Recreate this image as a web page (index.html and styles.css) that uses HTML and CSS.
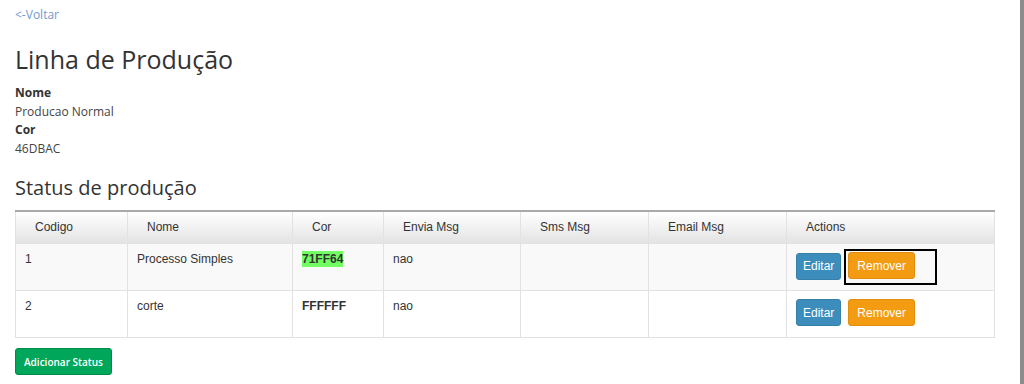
FILE: index.html
```html
<!DOCTYPE html>
<html lang="pt">
<head>
    <meta charset="UTF-8">
    <title>Linha de Produção</title>
    <link rel="stylesheet" href="styles.css">
</head>
<body>
    <div class="page">
        <a class="back" href="#">&lt;-Voltar</a>

        <h1>Linha de Produção</h1>

        <dl class="details">
            <dt>Nome</dt>
            <dd>Producao Normal</dd>
            <dt>Cor</dt>
            <dd>46DBAC</dd>
        </dl>

        <h2>Status de produção</h2>

        <table class="status-table">
            <colgroup>
                <col style="width: 112px">
                <col style="width: 165px">
                <col style="width: 91px">
                <col style="width: 137px">
                <col style="width: 128px">
                <col style="width: 138px">
                <col>
            </colgroup>
            <thead>
                <tr>
                    <th>Codigo</th>
                    <th>Nome</th>
                    <th>Cor</th>
                    <th>Envia Msg</th>
                    <th>Sms Msg</th>
                    <th>Email Msg</th>
                    <th>Actions</th>
                </tr>
            </thead>
            <tbody>
                <tr>
                    <td>1</td>
                    <td>Processo Simples</td>
                    <td><span class="swatch" style="background-color: #71FF64">71FF64</span></td>
                    <td>nao</td>
                    <td></td>
                    <td></td>
                    <td>
                        <div class="actions">
                            <button class="btn btn-edit">Editar</button>
                            <span class="focus-box"><button class="btn btn-remove">Remover</button></span>
                        </div>
                    </td>
                </tr>
                <tr>
                    <td>2</td>
                    <td>corte</td>
                    <td><span class="swatch" style="background-color: #FFFFFF">FFFFFF</span></td>
                    <td>nao</td>
                    <td></td>
                    <td></td>
                    <td>
                        <div class="actions">
                            <button class="btn btn-edit">Editar</button>
                            <button class="btn btn-remove">Remover</button>
                        </div>
                    </td>
                </tr>
            </tbody>
        </table>

        <button class="btn btn-add">Adicionar Status</button>
    </div>
    <div class="edge"></div>
</body>
</html>
```

FILE: styles.css
```css
body {
    margin: 0;
    padding: 0;
    background-color: #ffffff;
    font-family: "Open Sans", "Noto Sans", sans-serif;
    color: #333333;
    display: flex;
}

.page {
    flex: 1;
    padding: 6px 25px 0 15px;
}

.edge {
    width: 4px;
    height: 384px;
    background-color: #8c8c8c;
}

.back {
    display: block;
    font-size: 12px;
    color: #6f9bd1;
    text-decoration: none;
    line-height: 18px;
}

h1 {
    margin: 18px 0 8px;
    font-size: 25px;
    font-weight: 400;
    line-height: 34px;
    color: #333;
}

.details {
    margin: 0;
    font-size: 12px;
    line-height: 18.5px;
}

.details dt {
    font-weight: bold;
}

.details dd {
    margin: 0;
    color: #444;
}

h2 {
    margin: 17px 0 9px;
    font-size: 20px;
    font-weight: 400;
    line-height: 26px;
}

.status-table {
    width: 980px;
    border-collapse: collapse;
    table-layout: fixed;
    font-family: "Liberation Sans", Arial, sans-serif;
    font-size: 12px;
    border-top: 2px solid #a9a9a9;
}

.status-table th,
.status-table td {
    border: 1px solid #e2e2e2;
    text-align: left;
}

.status-table th {
    font-weight: normal;
    height: 29px;
    padding: 0 0 2px 19px;
    background: linear-gradient(#ffffff, #e3e3e3);
    color: #333;
}

.status-table td {
    height: 47px;
    padding: 8px 9px 0;
    vertical-align: top;
    box-sizing: border-box;
}

.status-table tbody tr:nth-child(odd) td {
    background-color: #f9f9f9;
}

.swatch {
    font-weight: bold;
    padding: 1px 0;
}

.actions {
    display: flex;
    align-items: center;
    gap: 7px;
}

.btn {
    border: 1px solid transparent;
    border-radius: 3px;
    color: #ffffff;
    font-family: "Liberation Sans", Arial, sans-serif;
    font-size: 12px;
    height: 27px;
    padding: 0 6px;
    cursor: pointer;
}

.btn-edit {
    background-color: #3c8dbc;
    border-color: #367fa9;
}

.btn-remove {
    background-color: #f39c12;
    border-color: #e08e0b;
    padding: 0 8px;
}

.focus-box {
    display: flex;
    padding: 1px 20px 4px 2px;
    margin: -3px 0 -5px -4px;
    border: 2px solid #000;
}

.btn-add {
    display: block;
    margin-top: 10px;
    background-color: #00a65a;
    border-color: #008d4c;
    font-family: "Open Sans", sans-serif;
    font-size: 10px;
    font-weight: 600;
    padding: 0 8px;
}
```
